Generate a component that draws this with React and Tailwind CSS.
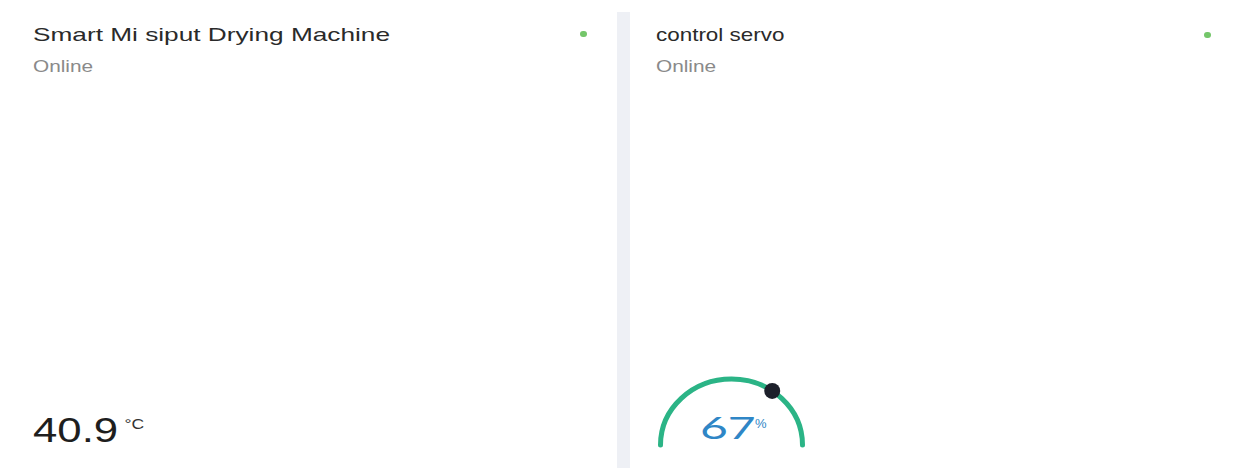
import React from "react";

const sans = "font-['Liberation_Sans',Arial,sans-serif]";

function StatusDot({ className = "" }) {
  return <div className={`w-[7px] h-[6px] rounded-full bg-[#74c66a] ${className}`} />;
}

function Gauge({ value }) {
  // semi-elliptical track with a knob placed along it
  const cx = 75.5;
  const cy = 75;
  const rx = 71;
  const ry = 66;
  const t = (55 * Math.PI) / 180;
  const kx = cx + rx * Math.cos(t);
  const ky = cy - ry * Math.sin(t);
  return (
    <div className="relative w-[166px] h-[82px]">
      <svg width="166" height="82" viewBox="0 0 166 82" className="absolute left-0 top-0">
        <path
          d={`M ${cx - rx} ${cy} A ${rx} ${ry} 0 0 1 ${cx + rx} ${cy}`}
          fill="none"
          stroke="#2bb486"
          strokeWidth="5"
          strokeLinecap="round"
        />
        <circle cx={kx} cy={ky} r="8" fill="#1d202b" />
      </svg>
      <div className="absolute left-[44px] top-[42px] h-[31px] text-[31px] leading-[31px] text-[#2f86c6] font-['Lato',sans-serif] origin-left scale-x-[1.55]">
        {value}
      </div>
      <div className={`absolute left-[99px] top-[47px] text-[13px] leading-[13px] text-[#2f86c6] ${sans}`}>%</div>
    </div>
  );
}

export default function App() {
  return (
    <div className={`w-[1237px] h-[468px] bg-white flex ${sans}`}>
      <div className="w-[617px] flex flex-col pl-[33px] pr-[30px] pt-[23px] pb-[21px]">
        <div className="flex justify-between items-start">
          <div>
            <div className="text-[19px] leading-[24px] text-[#2a2a2a] origin-left scale-x-[1.38] whitespace-nowrap">
              Smart Mi siput Drying Machine
            </div>
            <div className="mt-[10px] text-[16px] leading-[20px] text-[#8a8a8a] origin-left scale-x-[1.3]">
              Online
            </div>
          </div>
          <StatusDot className="mt-[8px]" />
        </div>
        <div className="mt-auto flex items-start origin-left scale-x-[1.25]">
          <span className="text-[35px] leading-[35px] text-[#1e1e1e]">40.9</span>
          <span className="ml-[5px] mt-[5px] text-[14px] leading-[14px] text-[#333]">°C</span>
        </div>
      </div>

      <div className="w-[13px] mt-[12px] bg-[#eef0f5]" />

      <div className="flex-1 flex flex-col pl-[26px] pr-[26px] pt-[23px] pb-[16px]">
        <div className="flex justify-between items-start">
          <div>
            <div className="text-[19px] leading-[24px] text-[#2a2a2a] origin-left scale-x-[1.18] whitespace-nowrap">
              control servo
            </div>
            <div className="mt-[10px] text-[16px] leading-[20px] text-[#8a8a8a] origin-left scale-x-[1.3]">
              Online
            </div>
          </div>
          <StatusDot className="mt-[9px]" />
        </div>
        <div className="mt-auto">
          <Gauge value="67" />
        </div>
      </div>
    </div>
  );
}
